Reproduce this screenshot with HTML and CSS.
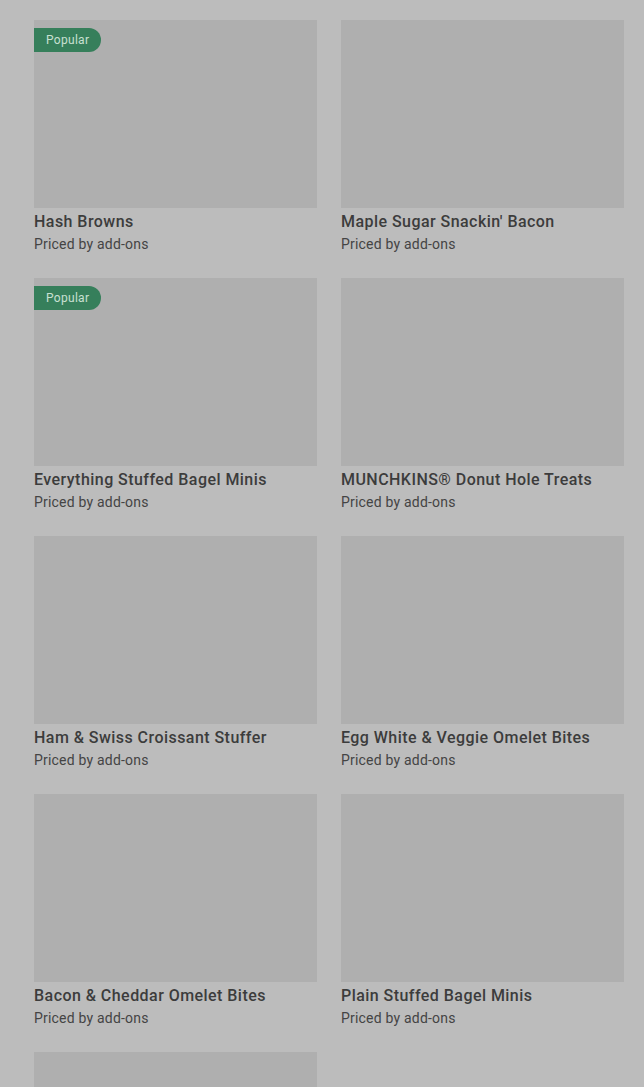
FILE: index.html
```html
<!DOCTYPE html>
<html lang="en">
<head>
  <meta charset="UTF-8">
  <meta name="viewport" content="width=device-width, initial-scale=1.0">
  <title>Menu</title>
  <link rel="stylesheet" href="styles.css">
</head>
<body>
  <div class="grid">
    <div class="item">
      <div class="thumb"><span class="badge">Popular</span></div>
      <div class="name">Hash Browns</div>
      <div class="price">Priced by add-ons</div>
    </div>
    <div class="item">
      <div class="thumb"></div>
      <div class="name">Maple Sugar Snackin' Bacon</div>
      <div class="price">Priced by add-ons</div>
    </div>
    <div class="item">
      <div class="thumb"><span class="badge">Popular</span></div>
      <div class="name">Everything Stuffed Bagel Minis</div>
      <div class="price">Priced by add-ons</div>
    </div>
    <div class="item">
      <div class="thumb"></div>
      <div class="name">MUNCHKINS® Donut Hole Treats</div>
      <div class="price">Priced by add-ons</div>
    </div>
    <div class="item">
      <div class="thumb"></div>
      <div class="name">Ham &amp; Swiss Croissant Stuffer</div>
      <div class="price">Priced by add-ons</div>
    </div>
    <div class="item">
      <div class="thumb"></div>
      <div class="name">Egg White &amp; Veggie Omelet Bites</div>
      <div class="price">Priced by add-ons</div>
    </div>
    <div class="item">
      <div class="thumb"></div>
      <div class="name">Bacon &amp; Cheddar Omelet Bites</div>
      <div class="price">Priced by add-ons</div>
    </div>
    <div class="item">
      <div class="thumb"></div>
      <div class="name">Plain Stuffed Bagel Minis</div>
      <div class="price">Priced by add-ons</div>
    </div>
    <div class="item">
      <div class="thumb"></div>
    </div>
  </div>
</body>
</html>
```

FILE: styles.css
```css
body {
  margin: 0;
  padding: 0;
  background-color: #bcbcbc;
  font-family: Roboto, "Liberation Sans", sans-serif;
}
.grid {
  display: grid;
  grid-template-columns: 1fr 1fr;
  column-gap: 24px;
  row-gap: 24px;
  padding: 20px 20px 0 34px;
  height: 1087px;
  box-sizing: border-box;
  overflow: hidden;
  align-content: start;
}
.thumb {
  position: relative;
  height: 188px;
  background: #afafaf;
}
.badge {
  position: absolute;
  top: 8px;
  left: 0;
  height: 24px;
  line-height: 24px;
  padding: 0 12px;
  font-size: 12px;
  letter-spacing: 0.3px;
  color: #c8e0d2;
  background: #367f5b;
  border-radius: 0 12px 12px 0;
}
.name {
  padding-top: 1px;
  font-size: 16px;
  font-weight: 500;
  line-height: 25px;
  letter-spacing: 0.45px;
  color: #3c3c3c;
}
.price {
  font-size: 14px;
  line-height: 20px;
  letter-spacing: 0.2px;
  color: #444;
}
```
